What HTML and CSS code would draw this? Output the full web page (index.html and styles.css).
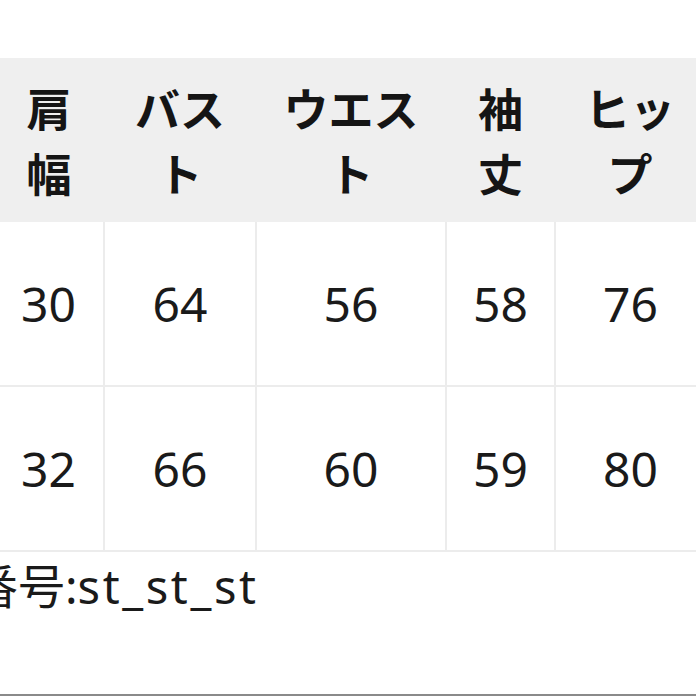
FILE: index.html
```html
<!DOCTYPE html>
<html lang="ja">
<head>
<meta charset="utf-8">
<link rel="stylesheet" href="styles.css">
</head>
<body>
<div class="page">
  <div class="sheet">
    <table class="size-table">
      <colgroup>
        <col class="c1"><col class="c2"><col class="c3"><col class="c4"><col class="c5">
      </colgroup>
      <thead>
        <tr>
          <th>肩<br>幅</th>
          <th>バス<br>ト</th>
          <th>ウエス<br>ト</th>
          <th>袖<br>丈</th>
          <th>ヒッ<br>プ</th>
        </tr>
      </thead>
      <tbody>
        <tr><td>30</td><td>64</td><td>56</td><td>58</td><td>76</td></tr>
        <tr><td>32</td><td>66</td><td>60</td><td>59</td><td>80</td></tr>
      </tbody>
    </table>
    <p class="note">番号:<span class="code">st_st_st</span></p>
  </div>
</div>
</body>
</html>
```
FILE: styles.css
```css
html, body {
  margin: 0;
  padding: 0;
  background: #ffffff;
}
.page {
  width: 696px;
  height: 696px;
  overflow: hidden;
  box-sizing: border-box;
  border-bottom: 2px solid #8a8a8a;
  padding-top: 58px;
}
.sheet {
  margin-left: -6px;
}
.size-table {
  border-collapse: collapse;
  table-layout: fixed;
  width: 711px;
  color: #111;
}
.c1 { width: 110px; }
.c2 { width: 152px; }
.c3 { width: 190px; }
.c4 { width: 109px; }
.c5 { width: 150px; }
.size-table th {
  background: #efefef;
  height: 164px;
  padding: 0;
  font-family: "Noto Sans CJK JP", sans-serif;
  font-weight: 600;
  font-size: 45px;
  line-height: 65px;
  text-align: center;
  vertical-align: middle;
  border: none;
  color: #151515;
}
.size-table td {
  height: 163px;
  padding: 0;
  font-family: "Noto Sans", "Noto Sans CJK JP", sans-serif;
  font-size: 48px;
  font-weight: 400;
  text-align: center;
  vertical-align: middle;
  border: 2px solid #ececec;
  border-top: none;
  color: #1a1a1a;
}
.size-table td:first-child {
  border-left: none;
}
.size-table td:last-child {
  border-right: none;
}
.note {
  margin: 6px 0 0 -23px;
  font-family: "Noto Sans", "Noto Sans CJK JP", sans-serif;
  font-size: 47px;
  line-height: 56px;
  color: #1a1a1a;
  white-space: nowrap;
}
.code {
  letter-spacing: 2.6px;
}
```
